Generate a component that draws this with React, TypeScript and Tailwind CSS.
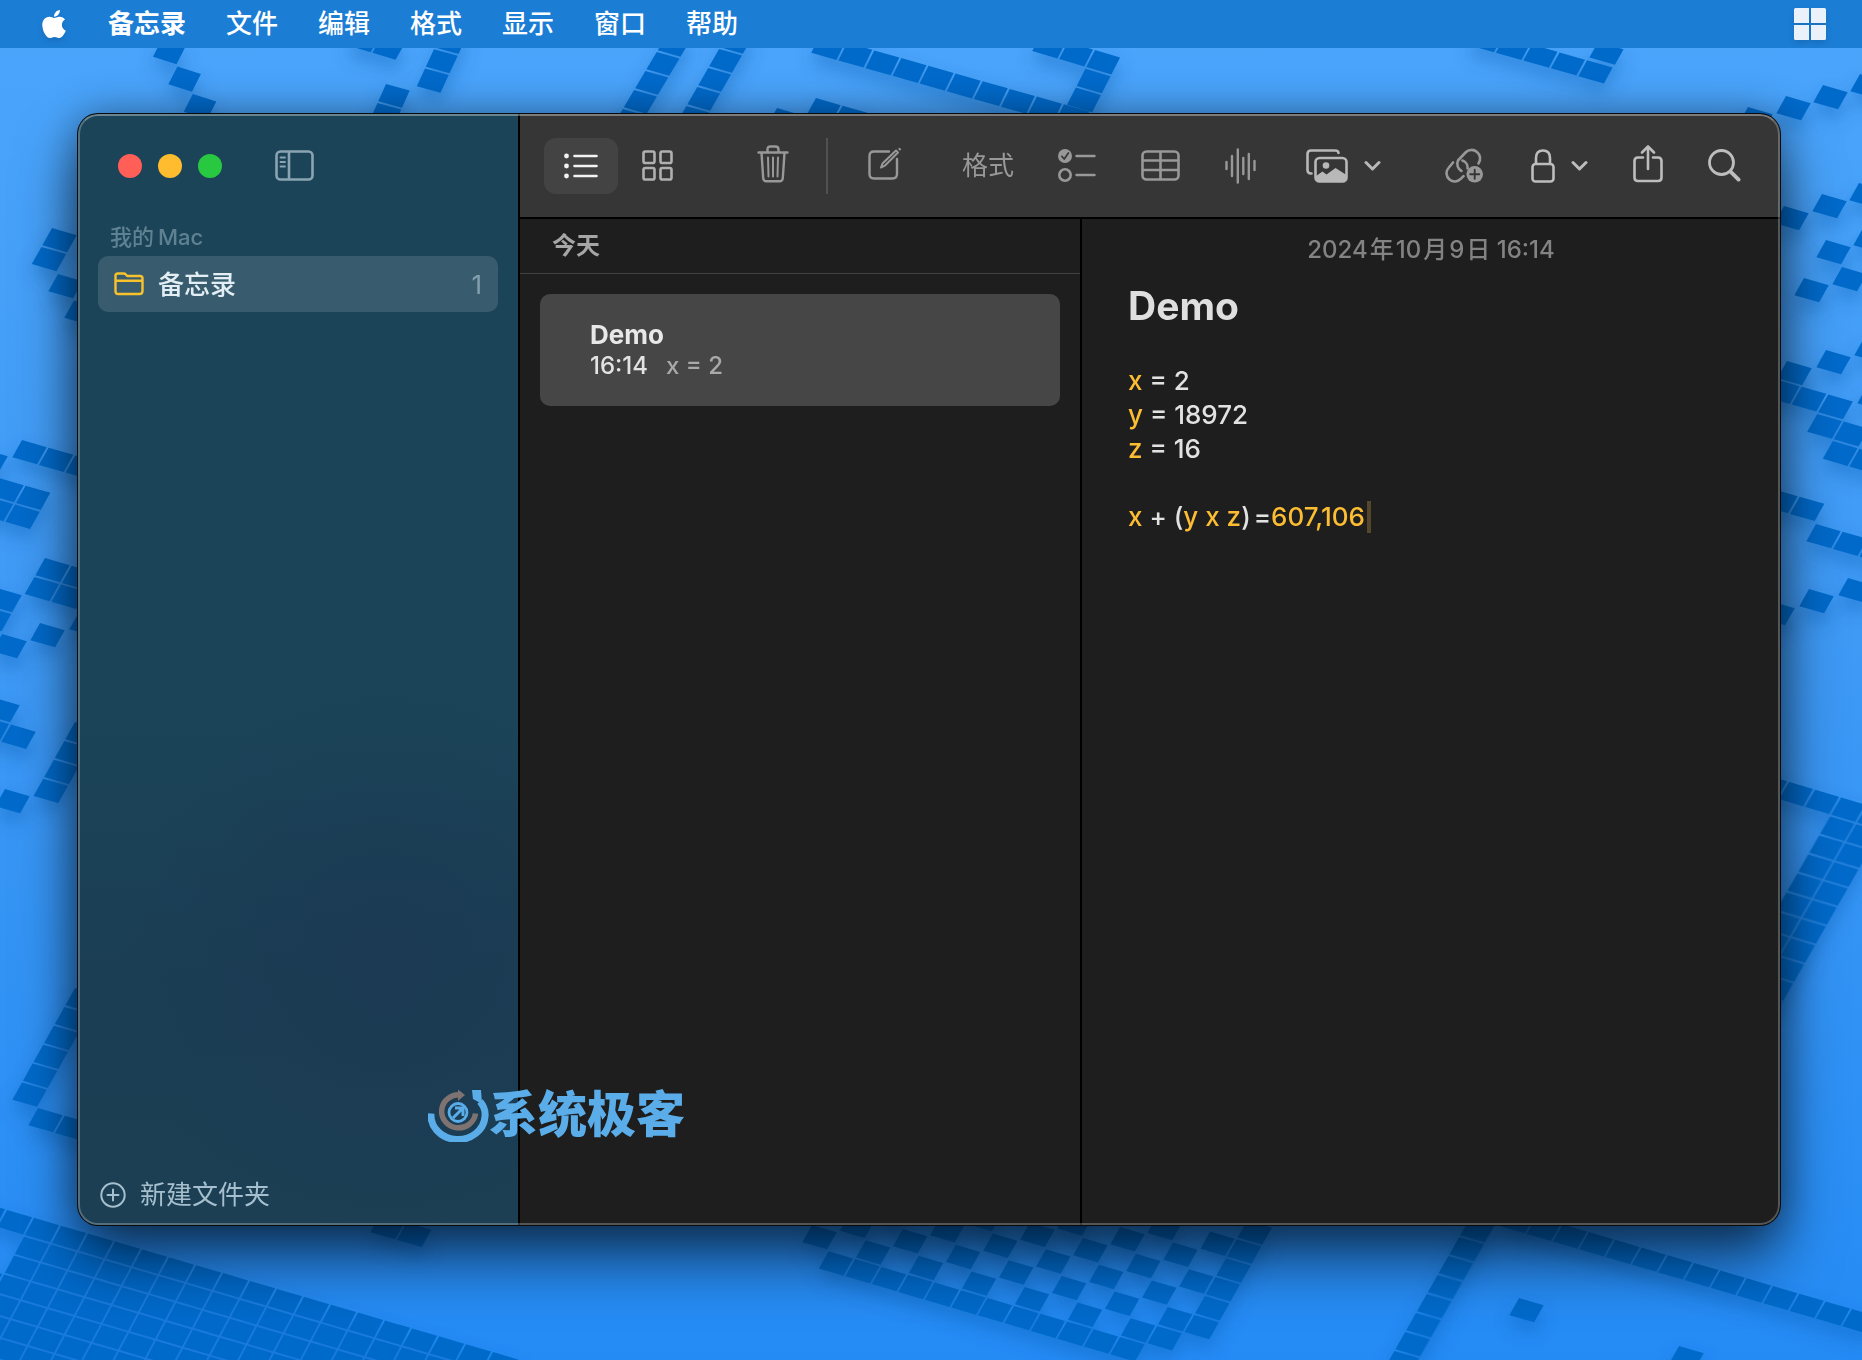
import React from 'react';
import { FaApple } from 'react-icons/fa';

interface TileGroup {
  x: number;
  y: number;
  a?: [number, number];
  b?: [number, number];
  rows: string[];
}

const A: [number, number] = [26.6, 7.7];
const B: [number, number] = [-10.6, 18.9];

// Each group is a small slanted grid, '#' marks a filled tile
const tileGroups: TileGroup[] = [
  // top edge
  { x: 162, y: 39, a: [25.3, 8], b: [-9.9, 19.5], rows: ['#', '.#', '..#'] },
  { x: 357, y: 28, a: [25, 7.5], rows: ['##'] },
  { x: 443, y: 30, a: [25.5, 7], b: [-9, 19.3], rows: ['#', '#', '#'] },
  { x: 386, y: 84, a: [25.5, 7], b: [-8.5, 19], rows: ['#', '#'] },
  { x: 668, y: 33, a: [24.5, 7], b: [-11.3, 19], rows: ['#', '#', '#', '#', '#'] },
  { x: 730, y: 30, a: [24.5, 7], b: [-10.9, 19], rows: ['#', '#', '#', '#', '#'] },
  { x: 820, y: 35, a: [27.1, 7.7], b: [-9.6, 19.5], rows: ['##########'] },
  { x: 1041, y: 34, a: [27, 8], b: [-9.6, 18.8], rows: ['###', '..#', '..#', '..#'] },
  { x: 777, y: 108, rows: ['#'] },
  { x: 816, y: 98, rows: ['##'] },
  { x: 1477, y: 29, a: [27.5, 7.8], b: [-9.5, 17.5], rows: ['#####'] },
  { x: 1598, y: 42, a: [27.5, 7.8], b: [-9.5, 17], rows: ['#'] },
  // right edge
  { x: 1860, y: 74, rows: ['#'] },
  { x: 1823, y: 85, rows: ['#'] },
  { x: 1786, y: 96, rows: ['#'] },
  { x: 1748, y: 107, rows: ['#'] },
  { x: 1859, y: 183, rows: ['#'] },
  { x: 1822, y: 194, rows: ['#'] },
  { x: 1784, y: 206, rows: ['#'] },
  { x: 1863, y: 228, rows: ['#'] },
  { x: 1826, y: 240, rows: ['#'] },
  { x: 1842, y: 267, rows: ['#'] },
  { x: 1804, y: 278, rows: ['#'] },
  { x: 1864, y: 338, rows: ['#'] },
  { x: 1826, y: 350, rows: ['#'] },
  { x: 1787, y: 361, rows: ['#'] },
  { x: 1775, y: 379, b: [-11, 19.5], rows: ['###', '..##', '...##'] },
  { x: 1867, y: 386, rows: ['#'] },
  { x: 1773, y: 489, rows: ['##'] },
  { x: 1816, y: 524, rows: ['###'] },
  { x: 1848, y: 578, rows: ['#'] },
  { x: 1809, y: 589, rows: ['#'] },
  { x: 1770, y: 601, rows: ['#'] },
  {
    x: 1763,
    y: 774,
    a: [26, 7.8],
    b: [-10.9, 19],
    rows: ['#####', '...##', '...##', '...##', '...##', '...##', '...##', '...##', '...##', '....#', '....#'],
  },
  // left edge
  { x: 52, y: 228, rows: ['#', '#'] },
  { x: 58, y: 274, rows: ['#', '.#'] },
  { x: -17, y: 449, rows: ['#'] },
  { x: 22, y: 440, rows: ['###'] },
  { x: -1, y: 478, rows: ['##', '##'] },
  { x: 45, y: 558, rows: ['##', '##'] },
  { x: 40, y: 623, rows: ['#'] },
  { x: 79, y: 612, rows: ['#'] },
  { x: -3, y: 588, rows: ['#', '#'] },
  { x: 2, y: 634, rows: ['#'] },
  { x: -5, y: 698, rows: ['#', '##'] },
  { x: 5, y: 789, rows: ['#'] },
  { x: 75, y: 722, rows: ['#', '#', '#', '#'] },
  { x: 75, y: 988, rows: ['#', '#', '#', '#', '#', '#'] },
  { x: 38, y: 1108, rows: ['###'] },
  // bottom edge
  {
    x: -20,
    y: 1202,
    a: [27, 7.9],
    b: [-10, 18.9],
    rows: [
      '####################',
      '..##################',
      '..##################',
      '.###################',
      '.###################',
      '.###################',
      '..##################',
      '..##################',
      '...#################',
    ],
  },
  { x: 380, y: 1215, rows: ['##'] },
  {
    x: 902.7,
    y: 1119,
    a: [26.5, 7.8],
    b: [-10.6, 18.9],
    rows: [
      '.............#',
      '..........#.##',
      '.......#.#.#.#',
      '....#.#.#.#.##',
      '.#.#.#.#.#.#.#',
      '#.#.#.#.#.#.##',
      '.#.#.#.#.#.##.',
      '############..',
    ],
  },
  { x: 812, y: 1225, rows: ['#'] },
  { x: 1470, y: 1218, b: [-10.8, 19], rows: ['#', '#', '#', '#', '#', '#', '#', '#'] },
  { x: 1510, y: 1209, a: [26.3, 7.7], rows: ['##############'] },
  { x: 1519, y: 1298, rows: ['#'] },
  { x: 1679, y: 1346, rows: ['#'] },
];

const Wallpaper: React.FC = () => (
  <svg
    className="absolute inset-0 h-full w-full"
    viewBox="0 0 1862 1360"
    preserveAspectRatio="xMidYMid slice"
    aria-hidden="true"
  >
    <defs>
      <linearGradient id="sky" x1="0" y1="0" x2="0" y2="1">
        <stop offset="0" stopColor="#4ba5fb" />
        <stop offset="0.5" stopColor="#3d99f5" />
        <stop offset="1" stopColor="#248bf5" />
      </linearGradient>
      <filter id="tileShadow" x="-5%" y="-5%" width="110%" height="110%">
        <feDropShadow dx="0" dy="10" stdDeviation="9" floodColor="#0b4fa0" floodOpacity="0.35" />
      </filter>
    </defs>
    <rect width="1862" height="1360" fill="url(#sky)" />
    <g fill="#066bcb" filter="url(#tileShadow)">
      {tileGroups.map((group, index) => {
        const a = group.a ?? A;
        const b = group.b ?? B;
        return (
          <g key={index} transform={`matrix(${a[0]} ${a[1]} ${b[0]} ${b[1]} ${group.x} ${group.y})`}>
            {group.rows.map((row, j) =>
              row
                .split('')
                .map((cell, i) =>
                  cell === '#' ? <rect key={`${i}-${j}`} x={i} y={j} width="0.93" height="0.91" /> : null
                )
            )}
          </g>
        );
      })}
    </g>
  </svg>
);

interface IconProps {
  width: number;
  height: number;
  children: React.ReactNode;
  stroke?: number;
}

const Icon: React.FC<IconProps> = ({ width, height, children, stroke = 2.4 }) => (
  <svg
    width={width}
    height={height}
    viewBox={`0 0 ${width} ${height}`}
    fill="none"
    stroke="currentColor"
    strokeWidth={stroke}
    strokeLinecap="round"
    strokeLinejoin="round"
    className="block shrink-0"
    aria-hidden="true"
  >
    {children}
  </svg>
);

const ChevronIcon = () => (
  <Icon width={17} height={12} stroke={3}>
    <path d="M2 2.5l6.5 6.5L15 2.5" />
  </Icon>
);

interface ToolProps {
  label: string;
  className?: string;
  children: React.ReactNode;
}

const Tool: React.FC<ToolProps> = ({ label, className = '', children }) => (
  <button type="button" aria-label={label} className={`flex shrink-0 items-center ${className}`}>
    {children}
  </button>
);

const menus = ['文件', '编辑', '格式', '显示', '窗口', '帮助'];

const MenuBar: React.FC = () => (
  <header className="relative flex h-12 items-center bg-[#1c7dd5] pr-9 pl-10 text-[26px] leading-8 text-white [text-shadow:0_2px_4px_rgba(0,0,0,0.35)]">
    <button type="button" aria-label="Apple" className="mr-10">
      <FaApple className="block h-8 w-7 drop-shadow-md" />
    </button>
    <nav className="flex gap-10 pb-px">
      <button type="button" className="font-bold">备忘录</button>
      {menus.map((menu) => (
        <button type="button" key={menu} className="font-medium">{menu}</button>
      ))}
    </nav>
    <button type="button" aria-label="Windows" className="ml-auto">
      <svg width="32" height="32" viewBox="0 0 32 32" fill="#eaf1fa" className="block drop-shadow-md" aria-hidden="true">
        <path d="M1.5 0H15v15H0V1.5Q0 0 1.5 0zM17 0h13.5Q32 0 32 1.5V15H17zM0 17h15v15H1.5Q0 32 0 30.5zM17 17h15v13.5Q32 32 30.5 32H17z" />
      </svg>
    </button>
  </header>
);

const Sidebar: React.FC = () => (
  <aside className="flex w-[442px] shrink-0 flex-col border-r-2 border-black bg-[radial-gradient(circle_at_70%_76%,rgba(27,56,82,0.7)_0%,transparent_30%),linear-gradient(180deg,#1b4458_0%,#1b4458_55%,#1b3e54_78%,#1c3f54_100%)]">
    <div className="flex h-[103px] items-center pl-10">
      <div className="flex gap-4">
        <button type="button" aria-label="关闭" className="size-6 rounded-full bg-[#ff5f57]" />
        <button type="button" aria-label="最小化" className="size-6 rounded-full bg-[#febc2e]" />
        <button type="button" aria-label="缩放" className="size-6 rounded-full bg-[#28c840]" />
      </div>
      <Tool label="切换边栏" className="ml-[53px] text-[#8ba4b1]">
        <Icon width={39} height={31} stroke={2.6}>
          <rect x="1.5" y="1.5" width="36" height="28" rx="4" />
          <path d="M14 2v27" />
          <path d="M5.5 7.5h4.5M5.5 12h4.5M5.5 16.5h4.5" strokeWidth="1.8" />
        </Icon>
      </Tool>
    </div>
    <h2 className="mt-1 ml-8 text-[22px] leading-8 font-medium text-[#5f8293]">
      我的<span className="ml-1">Mac</span>
    </h2>
    <a href="#notes" className="mx-5 mt-[3px] flex h-14 items-center rounded-[10px] bg-[#385c6e] px-4">
      <span className="text-[#f8c22d]">
        <Icon width={30} height={24}>
          <path d="M1.5 19V4q0-2.5 2.5-2.5h5.5q1.5 0 2.3 1l1.4 1.5H26q2.5 0 2.5 2.5V19q0 3-3 3h-21q-3 0-3-3zM1.5 8.8h27" />
        </Icon>
      </span>
      <span className="ml-[14px] text-[26px] font-medium text-[#e3eef4]">备忘录</span>
      <span className="ml-auto text-[26px] text-[#83a0ae]">1</span>
    </a>
    <button type="button" className="mt-auto mb-3 ml-[22px] flex items-center gap-[14px] text-[26px] leading-9 text-[#a5bfce]">
      <Icon width={26} height={26} stroke={2}>
        <circle cx="13" cy="13" r="11.7" />
        <path d="M13 7.5v11M7.5 13h11" />
      </Icon>
      新建文件夹
    </button>
  </aside>
);

const Toolbar: React.FC = () => (
  <div className="flex h-[105px] items-center border-b-2 border-black bg-[#363636] pr-[39px] pl-6 text-[#989898]">
    <Tool label="列表视图" className="h-14 w-[74px] justify-center rounded-[12px] bg-[#434343] text-[#f2f2f2]">
      <Icon width={34} height={26} stroke={2.6}>
        <path d="M10.5 3h22M10.5 13h22M10.5 23h22" />
        <g fill="currentColor" stroke="none">
          <circle cx="2.5" cy="3" r="2.4" />
          <circle cx="2.5" cy="13" r="2.4" />
          <circle cx="2.5" cy="23" r="2.4" />
        </g>
      </Icon>
    </Tool>
    <Tool label="画廊视图" className="ml-6 text-[#b0b0b0]">
      <Icon width={31} height={31} stroke={2.6}>
        <rect x="1.5" y="1.5" width="11" height="11.5" rx="1.8" />
        <rect x="18.5" y="1.5" width="11" height="11.5" rx="1.8" />
        <rect x="1.5" y="18" width="11" height="11.5" rx="1.8" />
        <rect x="18.5" y="18" width="11" height="11.5" rx="1.8" />
      </Icon>
    </Tool>
    <Tool label="删除" className="ml-[84px] pb-1">
      <Icon width={32} height={38}>
        <path d="M1.5 7.5h29M10.5 7V4.5q0-3 3-3h5q3 0 3 3V7M4.5 8l1.7 25q.2 3.3 3.3 3.3h13q3.1 0 3.3-3.3L27.5 8" />
        <path d="M11 12.5l.5 19M16 12.5v19M21 12.5l-.5 19" strokeWidth="2" />
      </Icon>
    </Tool>
    <div className="ml-[37px] h-14 w-[2px] shrink-0 bg-[#515151]" />
    <Tool label="新建备忘录" className="ml-10 pb-1">
      <Icon width={34} height={34}>
        <path d="M21 4.5H6Q1.5 4.5 1.5 9v18q0 4.5 4.5 4.5h18.5q4.5 0 4.5-4.5V12" />
        <path d="M13 20.5l1.5-4L28 3.5l2 2-13.2 13.2zM31.3 1.8l.8.6" strokeWidth="2" />
      </Icon>
    </Tool>
    <button type="button" className="ml-[60px] shrink-0 text-[26px] leading-8">格式</button>
    <Tool label="核对清单" className="ml-11">
      <Icon width={38} height={34}>
        <circle cx="7" cy="7" r="7" fill="currentColor" stroke="none" />
        <path d="M3.8 7.3l2.4 2.7 4.2-6" stroke="#363636" strokeWidth="1.7" />
        <circle cx="7" cy="26" r="5.7" strokeWidth="2.6" />
        <path d="M18.5 7h18M18.5 26h18" />
      </Icon>
    </Tool>
    <Tool label="表格" className="ml-[45px]">
      <Icon width={39} height={31} stroke={2.6}>
        <rect x="1.5" y="1.5" width="36" height="28" rx="4" />
        <path d="M2 10.5h35M2 20h35M19.5 2v27" />
      </Icon>
    </Tool>
    <Tool label="录音" className="ml-[45px]">
      <Icon width={31} height={36}>
        <path d="M1.5 14v7M7 8v20M12.8 1.5v33M18.3 10v16M23.8 6v25M29.5 13v9" />
      </Icon>
    </Tool>
    <Tool label="媒体" className="ml-[50px] gap-4 text-[#b8b8b8]">
      <Icon width={42} height={34} stroke={2.6}>
        <path d="M5.5 24.5H5q-3.5 0-3.5-3.5V5Q1.5 1.5 5 1.5h24q3.5 0 3.5 2.5" />
        <rect x="9.5" y="9" width="31" height="23.5" rx="4" />
        <circle cx="20" cy="16.5" r="3.3" fill="currentColor" stroke="none" />
        <path d="M10 27l6.5-4.5 4 3L29.5 19l11 7v3q0 3-3.5 3H13q-3 0-3-3z" fill="currentColor" stroke="none" />
      </Icon>
      <ChevronIcon />
    </Tool>
    <Tool label="添加链接" className="ml-auto">
      <Icon width={38} height={35} stroke={2.6}>
        <path d="M33.5 15.5a8.5 8.5 0 0 0-1.5-11.5 8.3 8.3 0 0 0-11.5.5L13 12.5a8 8 0 0 0 3.5 10.5" />
        <path d="M8 14.5L3.5 20a8 8 0 0 0 1 11.5 8.3 8.3 0 0 0 11.5-.8l2.5-2.5M17.5 12.5a7.5 7.5 0 0 1 5 8" />
        <circle cx="29.7" cy="26.3" r="8.3" fill="currentColor" stroke="none" />
        <path d="M29.7 21.8v9M25.2 26.3h9" stroke="#363636" strokeWidth="1.9" />
      </Icon>
    </Tool>
    <Tool label="锁定" className="ml-12 gap-4 text-[#bdbdbd]">
      <Icon width={24} height={34} stroke={2.6}>
        <rect x="1.5" y="15" width="21" height="17.5" rx="3" />
        <path d="M5 14.5V9q0-7.5 7-7.5T19 9v5.5" />
      </Icon>
      <ChevronIcon />
    </Tool>
    <Tool label="共享" className="ml-[45px] pb-1 text-[#bdbdbd]">
      <Icon width={30} height={38} stroke={2.6}>
        <path d="M10 12.5H5Q1.5 12.5 1.5 16v16.5Q1.5 36 5 36h20q3.5 0 3.5-3.5V16q0-3.5-3.5-3.5h-5" />
        <path d="M15 24V2M9 7.5L15 1.5l6 6" />
      </Icon>
    </Tool>
    <Tool label="搜索" className="ml-[45px] text-[#bdbdbd]">
      <Icon width={33} height={33} stroke={2.8}>
        <circle cx="13.5" cy="13.5" r="12" />
        <path d="M22.8 22.8l7.8 7.8" strokeWidth="3.8" />
      </Icon>
    </Tool>
  </div>
);

const NoteList: React.FC = () => (
  <section className="w-[562px] shrink-0 border-r-2 border-black">
    <h2 className="flex h-[55px] items-center border-b border-[#424242] pl-8 text-[24px] font-bold text-[#a6a6a6]">今天</h2>
    <a href="#demo" className="mx-5 mt-5 block h-28 rounded-[10px] bg-[#464646] px-[50px] pt-[25px] text-[26px] leading-[31px]">
      <div className="font-bold text-[#e8e8e8]">Demo</div>
      <div className="flex gap-[18px] text-[24px] font-medium text-[#a9a9a9]">
        <span className="text-[#e3e3e3]">16:14</span>
        <span>x = 2</span>
      </div>
    </a>
  </section>
);

interface VariableProps {
  children: React.ReactNode;
}

const Variable: React.FC<VariableProps> = ({ children }) => <span className="text-[#fcbd33]">{children}</span>;

const NoteEditor: React.FC = () => (
  <article className="min-w-0 flex-1 px-[46px] pt-[15px] text-[26px] leading-[34px] font-medium text-[#e2e2e2]">
    <time className="block text-center text-[24px] leading-8 text-[#838383]">2024<span className="mx-[2px]">年</span>10<span className="mx-[2px]">月</span>9<span className="ml-[2px]">日</span> 16:14</time>
    <h1 className="mt-4 text-[39px] leading-[48px] font-bold text-[#dfdfdf]">Demo</h1>
    <div className="mt-[34px]">
      <p><Variable>x</Variable> = 2</p>
      <p><Variable>y</Variable> = 18972</p>
      <p><Variable>z</Variable> = 16</p>
    </div>
    <p className="mt-[34px] flex items-center">
      <span><Variable>x</Variable> + (<Variable>y x z</Variable>)</span>
      <span className="ml-[3px]">=</span>
      <span className="text-[#fcbd33]">607,106</span>
      <span className="ml-[2px] h-8 w-1 bg-[#54472a]" />
    </p>
  </article>
);

const Watermark: React.FC = () => (
  <div className="pointer-events-none absolute bottom-[82px] left-[350px] flex items-center text-[#5aade8]">
    <svg width="61" height="54" viewBox="0 0 61 54" fill="none" aria-hidden="true">
      <path d="M3 25.5a27 24.5 0 0 0 54 3q1-8-5-15" stroke="currentColor" strokeWidth="7" />
      <path d="M44 2h9l1 14-9-5z" fill="currentColor" />
      <path d="M33 7a17 16.5 0 1 0 14.5 18.5" stroke="#7f7371" strokeWidth="5.5" />
      <path d="M30 1.5l7 5.500-7 6z" fill="#7f7371" />
      <circle cx="30" cy="24.5" r="9" stroke="currentColor" strokeWidth="2.8" />
      <path d="M25 30l9-9M27 20h8v8" stroke="currentColor" strokeWidth="3" />
    </svg>
    <span className="text-[49px] leading-[56px] font-black">系统极客</span>
  </div>
);

const App: React.FC = () => (
  <div lang="zh-CN" className="relative flex min-h-screen flex-col overflow-hidden bg-[#3d99f5] font-['Inter','Noto_Sans_CJK_SC',sans-serif]">
    <Wallpaper />
    <MenuBar />
    <main className="relative flex flex-1 pt-[66px] pr-[82px] pb-[135px] pl-[78px]">
      <div className="relative flex flex-1 overflow-hidden rounded-[20px] bg-[#1e1e1e] shadow-[0_0_0_1px_#0b0b0b,0_34px_60px_rgba(0,0,0,0.6),0_0_40px_rgba(0,0,0,0.35)]">
        <Sidebar />
        <div className="flex min-w-0 flex-1 flex-col">
          <Toolbar />
          <div className="flex flex-1">
            <NoteList />
            <NoteEditor />
          </div>
        </div>
        <div className="pointer-events-none absolute inset-0 rounded-[20px] border-2 border-white/25 border-t-white/35" />
        <Watermark />
      </div>
    </main>
  </div>
);

export default App;
